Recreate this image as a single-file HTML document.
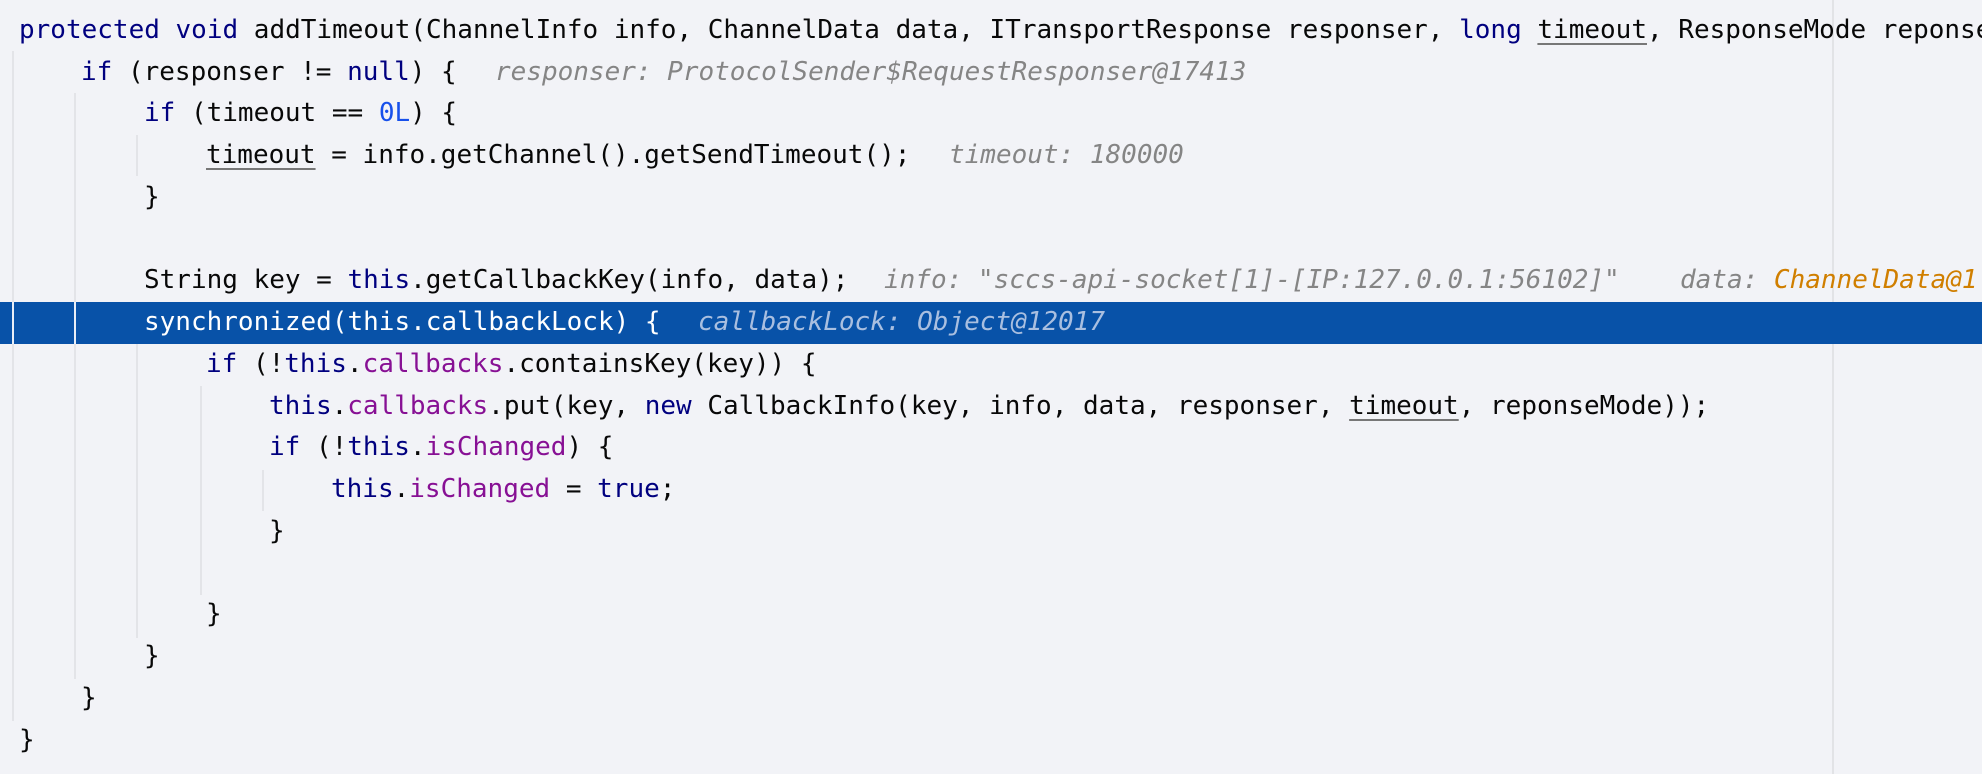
<!DOCTYPE html>
<html><head><meta charset="utf-8"><style>
html,body{margin:0;padding:0}
body{width:1982px;height:774px;background:#f2f3f7;position:relative;overflow:hidden;font-family:"DejaVu Sans Mono","Liberation Mono",monospace;font-size:26px;color:#080808}
#wrap{position:absolute;left:0;top:0;width:1982px;height:774px;overflow:hidden}
.l{position:absolute;left:0;height:41.7px;line-height:41.7px;white-space:pre}
.g{position:absolute;width:2px;background:#e3e4e8}
.hl{position:absolute;left:0;top:302px;width:1982px;height:42px;background:#0852a8}
.k{color:#00007f}
.n{color:#1750eb}
.f{color:#871094}
.u{text-decoration:underline;text-decoration-color:#777;text-underline-offset:5px}
.h{position:absolute;font-style:italic;color:#858585;white-space:pre;height:41.7px;line-height:41.7px}
.o{color:#d07f00}
.w{color:#fff}
.hw{color:#a9bfe0}
</style></head><body><div id="wrap">
<div class="g" style="left:1832px;top:0;height:774px;background:#e2e3e6"></div>
<div class="hl"></div>
<div class="g" style="left:12px;top:51px;height:670px"></div>
<div class="g" style="left:74px;top:93px;height:586px"></div>
<div class="g" style="left:136px;top:135px;height:41px"></div>
<div class="g" style="left:136px;top:344px;height:294px"></div>
<div class="g" style="left:200px;top:386px;height:209px"></div>
<div class="g" style="left:262px;top:470px;height:41px"></div>
<div class="g" style="left:12px;top:302px;height:42px;background:#e8eef7"></div>
<div class="g" style="left:74px;top:302px;height:42px;background:#e8eef7"></div>

<div class="l" style="top:10px;left:19px"><span class="k">protected void</span> addTimeout(ChannelInfo info, ChannelData data, ITransportResponse responser, <span class="k">long</span> <span class="u">timeout</span>, ResponseMode reponse</div>
<div class="l" style="top:52px;left:81px"><span class="k">if</span> (responser != <span class="k">null</span>) {</div>
<div class="h" style="top:52px;left:495px">responser: ProtocolSender$RequestResponser@17413</div>
<div class="l" style="top:93px;left:144px"><span class="k">if</span> (timeout == <span class="n">0L</span>) {</div>
<div class="l" style="top:135px;left:206px"><span class="u">timeout</span> = info.getChannel().getSendTimeout();</div>
<div class="h" style="top:135px;left:949px">timeout: 180000</div>
<div class="l" style="top:177px;left:144px">}</div>
<div class="l" style="top:260px;left:144px">String key = <span class="k">this</span>.getCallbackKey(info, data);</div>
<div class="h" style="top:260px;left:884px">info: "sccs-api-socket[1]-[IP:127.0.0.1:56102]"</div>
<div class="h" style="top:260px;left:1680px">data: <span class="o">ChannelData@1</span></div>
<div class="l w" style="top:302px;left:144px">synchronized(this.callbackLock) {</div>
<div class="h hw" style="top:302px;left:698px">callbackLock: Object@12017</div>
<div class="l" style="top:344px;left:206px"><span class="k">if</span> (!<span class="k">this</span>.<span class="f">callbacks</span>.containsKey(key)) {</div>
<div class="l" style="top:386px;left:269px"><span class="k">this</span>.<span class="f">callbacks</span>.put(key, <span class="k">new</span> CallbackInfo(key, info, data, responser, <span class="u">timeout</span>, reponseMode));</div>
<div class="l" style="top:427px;left:269px"><span class="k">if</span> (!<span class="k">this</span>.<span class="f">isChanged</span>) {</div>
<div class="l" style="top:469px;left:331px"><span class="k">this</span>.<span class="f">isChanged</span> = <span class="k">true</span>;</div>
<div class="l" style="top:511px;left:269px">}</div>
<div class="l" style="top:594px;left:206px">}</div>
<div class="l" style="top:636px;left:144px">}</div>
<div class="l" style="top:678px;left:81px">}</div>
<div class="l" style="top:720px;left:19px">}</div>
</div></body></html>
